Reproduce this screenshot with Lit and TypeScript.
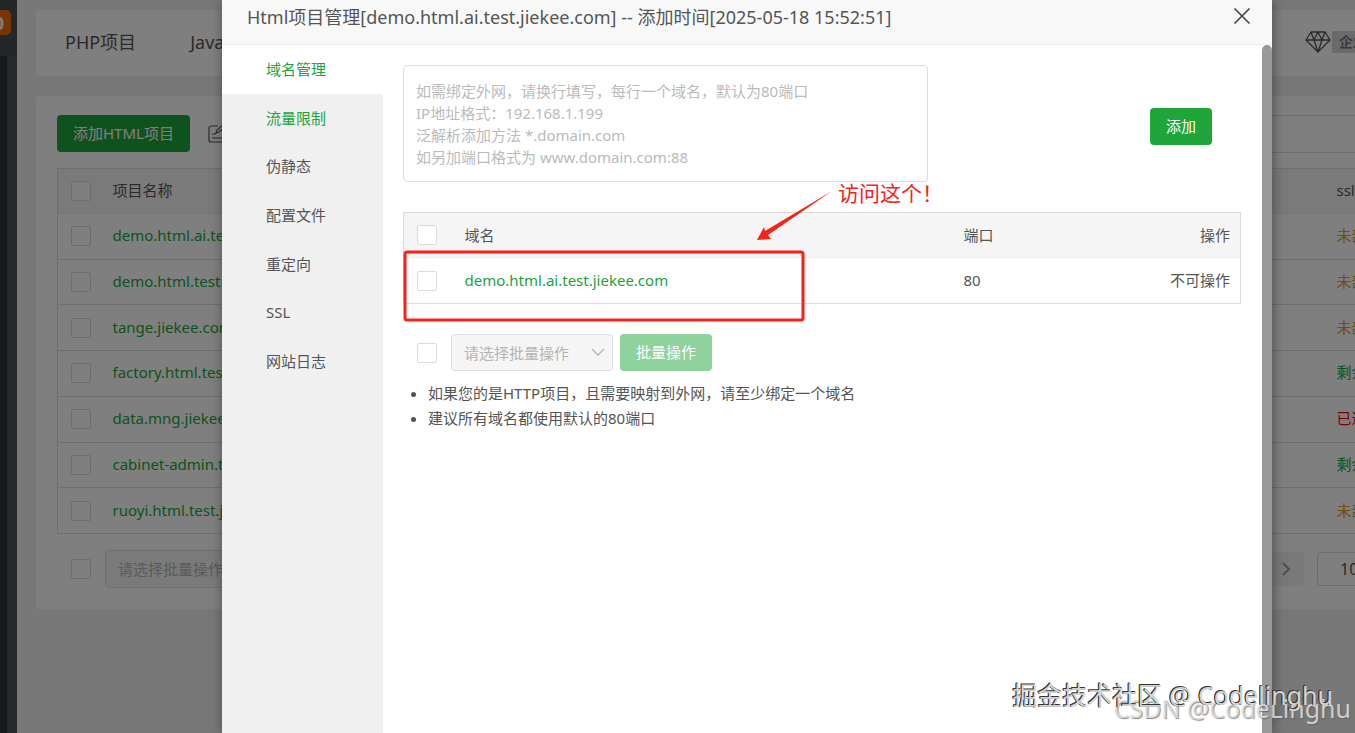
import { LitElement, html, css } from "lit";
import { customElement } from "lit/decorators.js";

const projects = [
  { name: "demo.html.ai.test.jiekee.com", ssl: "未部署", tone: "warn" },
  { name: "demo.html.test.jiekee.com", ssl: "未部署", tone: "warn" },
  { name: "tange.jiekee.com", ssl: "未部署", tone: "warn" },
  { name: "factory.html.test.jiekee.com", ssl: "剩余59天", tone: "ok" },
  { name: "data.mng.jiekee.com", ssl: "已过期", tone: "bad" },
  { name: "cabinet-admin.test.jiekee.com", ssl: "剩余59天", tone: "ok" },
  { name: "ruoyi.html.test.jiekee.com", ssl: "未部署", tone: "warn" },
];

const base = css`
  * { box-sizing: border-box; }
  button, input, select, textarea { font: inherit; color: inherit; margin: 0; }
  button { cursor: pointer; }
  a { color: #20a53a; text-decoration: none; }
  table { border-collapse: collapse; table-layout: fixed; width: 100%; }
  th { font-weight: 400; text-align: left; }
  th, td { padding: 0; white-space: nowrap; }
  .check {
    appearance: none;
    display: block;
    flex: none;
    width: 20px;
    height: 20px;
    border: 1px solid #dcdcdc;
    border-radius: 2px;
    background: #fff;
  }
  .primary {
    border: 0;
    border-radius: 4px;
    background: #20a53a;
    color: #fff;
    height: 37px;
    padding: 0 16px 2px;
    white-space: nowrap;
  }
  .select {
    appearance: none;
    height: 37px;
    border: 1px solid #dcdfe6;
    border-radius: 4px;
    background: #f5f5f5;
    color: #b4b4b4;
    padding: 0 12px;
    opacity: 1;
  }
`;

@customElement("project-board")
export class ProjectBoard extends LitElement {
  static styles = [base, css`
    :host { display: flex; height: 100%; overflow: hidden; background: #f0f0f0; }
    .rail { flex: none; width: 17px; display: flex; flex-direction: column; background: #4c5359; }
    .brand { height: 56px; padding-top: 10px; background: #484e54; overflow: hidden; }
    .badge {
      display: flex; justify-content: flex-end; align-items: center;
      width: 11px; height: 25px; padding-right: 7px;
      border-radius: 0 5px 5px 0; background: #f06a10; color: #fff;
      font-size: 18px; font-weight: 700; overflow: hidden;
    }
    .nav { flex: 1; width: 7px; background: #2c3338; }
    .main { flex: 1; min-width: 0; padding: 10px 0 0 19px; display: flex; flex-direction: column; gap: 20px; }
    .card { background: #fff; border-radius: 4px; margin-right: -120px; }
    .tabs { height: 66px; display: flex; align-items: center; padding: 0 0 2px 29px; gap: 54px; font-size: 18px; }
    .tabs a { color: #555; }
    .edition { margin-left: auto; width: 171px; display: flex; align-items: center; color: #777; font-size: 14px; font-weight: 700; }
    .edition svg { flex: none; width: 28px; height: 24px; }
    .edition span { flex: 1; height: 22px; line-height: 22px; padding-left: 7px; background: #d4d4d4; }
    .body { padding: 19px 21px 21px; }
    .tools { display: flex; align-items: center; gap: 17px; height: 37px; }
    .note { width: 20px; height: 20px; flex: none; }
    .search { margin-left: auto; width: 300px; height: 38px; border: 1px solid #dcdcdc; border-radius: 4px; }
    table { margin-top: 16px; height: 366px; border: 1px solid #dcdcdc; }
    tr { height: 40px; border-bottom: 1px solid #dcdcdc; }
    thead tr { background: #f5f5f5; border-bottom-color: #ebebeb; }
    th { height: 45px; }
    td:not(.pick), th:not(.pick) { padding-bottom: 2px; }
    .c-check { width: 55px; }
    .c-ssl { width: 117px; }
    .pick { padding-left: 13px; }
    .warn { color: #e69a24; }
    .ok { color: #20a53a; }
    .bad { color: #ef0808; }
    .foot { display: flex; align-items: center; margin-top: 16px; padding-left: 14px; }
    .foot .select { width: 200px; margin-left: 14px; height: 38px; }
    .pager { margin-left: auto; display: flex; gap: 13px; }
    .pager .next { width: 34px; height: 34px; padding: 0; border: 0; border-radius: 3px; background: #f2f2f2; display: grid; place-items: center; }
    .pager .size { appearance: none; width: 137px; height: 34px; border: 1px solid #dcdcdc; border-radius: 3px; background: #fff; padding: 0 22px; font-size: 16px; }
  `];

  render() {
    return html`
      <aside class="rail"><div class="brand"><span class="badge">0</span></div><div class="nav"></div></aside>
      <main class="main">
        <nav class="card tabs">
          <a href="#php">PHP项目</a><a href="#java">Java项目</a>
          <div class="edition">
            <svg viewBox="0 0 28 24" fill="none" stroke="#555" stroke-width="1.3" stroke-linejoin="round">
              <path d="M7 2h14l5 8-12 12L2 10zM2 10h24M7 2l3 8 4 12 4-12 3-8M10 10l4-8 4 8" />
            </svg>
            <span>企业版</span>
          </div>
        </nav>
        <section class="card body">
          <div class="tools">
            <button class="primary">添加HTML项目</button>
            <svg class="note" viewBox="0 0 20 20" fill="none" stroke="#555" stroke-width="1.2">
              <path d="M11 2H4a2 2 0 0 0-2 2v12a2 2 0 0 0 2 2h12a2 2 0 0 0 2-2V9M5 10h4M5 14h10M9 9l1-3 6-5 2 2-6 5z" />
            </svg>
            <input class="search" aria-label="搜索" />
          </div>
          <table>
            <colgroup><col class="c-check" /><col /><col class="c-ssl" /></colgroup>
            <thead>
              <tr><th class="pick"><input class="check" type="checkbox" aria-label="全选" /></th><th>项目名称</th><th>ssl证书</th></tr>
            </thead>
            <tbody>
              ${projects.map((p) => html`<tr>
                <td class="pick"><input class="check" type="checkbox" aria-label=${p.name} /></td>
                <td><a href="#project">${p.name}</a></td>
                <td class=${p.tone}>${p.ssl}</td>
              </tr>`)}
            </tbody>
          </table>
          <div class="foot">
            <input class="check" type="checkbox" aria-label="全选" />
            <select class="select" aria-label="批量操作" disabled><option>请选择批量操作</option></select>
            <div class="pager">
              <button class="next" aria-label="下一页">
                <svg width="14" height="14" viewBox="0 0 14 14" fill="none" stroke="#999" stroke-width="1.8"><path d="M3 1l6 6-6 6" /></svg>
              </button>
              <select class="size" aria-label="每页条数"><option>10条/页</option></select>
            </div>
          </div>
        </section>
      </main>`;
  }
}

@customElement("domain-dialog")
export class DomainDialog extends LitElement {
  static styles = [base, css`
    :host { display: flex; flex-direction: column; background: #fff; color: #555; }
    header {
      flex: none; display: flex; justify-content: space-between; align-items: flex-start;
      height: 45px; padding: 4px 20px 0 25px;
      background: #f8f8f8; border-bottom: 1px solid #eee;
    }
    h1 { margin: 0; font-size: 18px; line-height: 27px; font-weight: 400; white-space: nowrap; }
    .close { border: 0; background: none; padding: 2px 0; line-height: 0; }
    .split { flex: 1; min-height: 0; display: flex; }
    .menu { flex: none; width: 161px; background: #f0f0f0; }
    .items { display: grid; grid-auto-rows: 1fr; height: 341px; }
    .items a { display: flex; align-items: center; padding: 0 0 1px 44px; color: #555; }
    .items a.on { background: #fff; }
    .items a.on, .items a.lit { color: #20a53a; }
    .pane { flex: 1; min-width: 0; padding: 20px 21px 0 20px; position: relative; }
    .bind { display: flex; align-items: center; justify-content: space-between; padding-right: 29px; }
    textarea {
      display: block; width: 525px; height: 117px; resize: none; overflow: hidden;
      padding: 14px 12px; line-height: 22px;
      border: 1px solid #dcdfe6; border-radius: 4px; outline: 0;
    }
    textarea::placeholder { color: #bbb; opacity: 1; }
    .bind .primary { margin-top: 6px; }
    table { margin-top: 30px; border: 1px solid #dcdcdc; }
    th { height: 45px; }
    td { height: 46px; }
    td:not(.pick) { padding-bottom: 2px; }
    thead { background: #f5f5f5; border-bottom: 1px solid #ebebeb; }
    .pick { padding-left: 13px; }
    .end { text-align: right; padding-right: 10px; }
    .c-check { width: 61px; }
    .c-port { width: 138px; }
    .c-op { width: 139px; }
    .batch { display: flex; align-items: center; margin-top: 30px; padding-left: 14px; }
    .picker { position: relative; margin: 0 7px 0 14px; }
    .picker .select { width: 162px; display: block; }
    .picker svg { position: absolute; right: 8px; top: 11px; }
    .batch .primary { background: #90d29d; }
    ul { margin: 10px 0 0; padding-left: 25px; line-height: 25px; }
    .scroll { flex: none; width: 10px; border-radius: 5px 5px 0 0; background: #999; }
    .mark { position: absolute; left: 0; top: 144px; width: 560px; height: 140px; pointer-events: none; }
    .say { position: absolute; left: 455px; top: 132px; font-size: 21px; line-height: 32px; color: #f5221b; white-space: nowrap; }
  `];

  render() {
    return html`
      <header>
        <h1>Html项目管理[demo.html.ai.test.jiekee.com] -- 添加时间[2025-05-18 15:52:51]</h1>
        <button class="close" aria-label="关闭">
          <svg width="20" height="20" viewBox="0 0 20 20" stroke="#444" stroke-width="1.6"><path d="M2.500 2.500l15 15M17.500 2.500l-15 15" /></svg>
        </button>
      </header>
      <div class="split">
        <nav class="menu">
          <div class="items">
            <a class="on" href="#domain">域名管理</a>
            <a class="lit" href="#flow">流量限制</a>
            <a href="#rewrite">伪静态</a>
            <a href="#config">配置文件</a>
            <a href="#redirect">重定向</a>
            <a href="#ssl">SSL</a>
            <a href="#logs">网站日志</a>
          </div>
        </nav>
        <section class="pane">
          <div class="bind">
            <textarea aria-label="域名" placeholder=${"如需绑定外网，请换行填写，每行一个域名，默认为80端口\nIP地址格式：192.168.1.199\n泛解析添加方法 *.domain.com\n如另加端口格式为 www.domain.com:88"}></textarea>
            <button class="primary">添加</button>
          </div>
          <table>
            <colgroup><col class="c-check" /><col /><col class="c-port" /><col class="c-op" /></colgroup>
            <thead><tr>
              <th class="pick"><input class="check" type="checkbox" aria-label="全选" /></th>
              <th>域名</th><th>端口</th><th class="end">操作</th>
            </tr></thead>
            <tbody><tr>
              <td class="pick"><input class="check" type="checkbox" aria-label="选择域名" /></td>
              <td><a href="#open">demo.html.ai.test.jiekee.com</a></td><td>80</td><td class="end">不可操作</td>
            </tr></tbody>
          </table>
          <div class="batch">
            <input class="check" type="checkbox" aria-label="全选" />
            <div class="picker">
              <select class="select" aria-label="批量操作" disabled><option>请选择批量操作</option></select>
              <svg width="14" height="14" viewBox="0 0 14 14" fill="none" stroke="#b4b4b4" stroke-width="1.4"><path d="M1 4l6 6 6-6" /></svg>
            </div>
            <button class="primary">批量操作</button>
          </div>
          <ul>
            <li>如果您的是HTTP项目，且需要映射到外网，请至少绑定一个域名</li>
            <li>建议所有域名都使用默认的80端口</li>
          </ul>
          <svg class="mark" viewBox="383 189 560 140">
            <rect x="405" y="252" width="398" height="68" rx="2" fill="none" stroke="#f5221b" stroke-width="3" />
            <path d="M832 191L765 231L764 227L757 240L771 239L768 235Z" fill="#f5221b" />
          </svg>
          <span class="say">访问这个！</span>
        </section>
        <div class="scroll"></div>
      </div>`;
  }
}

@customElement("app-root")
export class AppRoot extends LitElement {
  static styles = css`
    :host {
      display: block; position: relative; height: 100vh; overflow: hidden;
      font-family: "Noto Sans", "Noto Sans CJK SC", sans-serif;
      font-size: 15px; line-height: 22px; color: #555;
    }
    .shade { position: absolute; inset: 0; background: rgba(0, 0, 0, 0.5); }
    .dialog { position: absolute; inset: 0 83px 0 222px; box-shadow: 1px 1px 12px rgba(0, 0, 0, 0.4); }
    .stamp { position: absolute; white-space: nowrap; font-size: 25px; line-height: 36px; }
    .first {
      right: 22px; bottom: 20px; color: #d4d4d4;
      text-shadow: -1px -1px 0 #333, -1px 0 0 #333;
    }
    .second {
      right: 4px; bottom: 7px; color: rgba(225, 225, 225, 0.85);
      text-shadow: 1px 1px 1px rgba(90, 90, 90, 0.7);
    }
  `;

  render() {
    return html`
      <project-board></project-board>
      <div class="shade"></div>
      <domain-dialog class="dialog"></domain-dialog>
      <span class="stamp second">CSDN @CodeLinghu</span>
      <span class="stamp first">掘金技术社区 @ Codelinghu</span>`;
  }
}
